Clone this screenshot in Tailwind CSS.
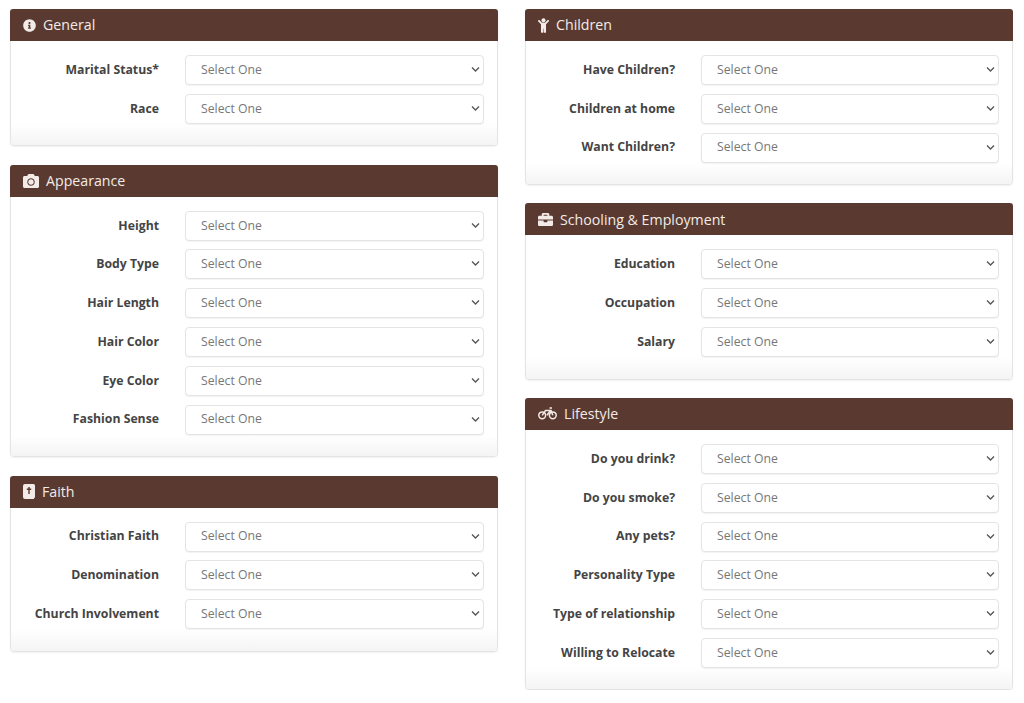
<!DOCTYPE html>
<html>
<head>
<meta charset="UTF-8" />
<title>Profile</title>
<script src="https://cdn.jsdelivr.net/npm/@tailwindcss/browser@4"></script>
</head>
<body class="bg-white font-['Open_Sans',sans-serif] text-[12.25px] text-[#444] overflow-hidden">
<div class="grid grid-cols-[488px_488px] gap-x-[27px] pl-[10px] pt-[9px]">

  <!-- left column -->
  <div class="flex flex-col gap-[18.4px]">
    <section class="rounded-[4px] border border-[#e4e4e4] shadow-[0_1px_2px_rgba(0,0,0,0.06)]">
      <header class="-m-px mb-0 h-[32px] flex items-center gap-[7px] pl-[13px] rounded-t-[3px] bg-[#5a3a30] text-[14.2px] text-[#f2ebe7]">
        <svg class="w-[13px] h-[13px]" viewBox="0 0 512 512" fill="currentColor"><path d="M256 8C119.043 8 8 119.083 8 256c0 136.997 111.043 248 248 248s248-111.003 248-248C504 119.083 392.957 8 256 8zm0 110c23.196 0 42 18.804 42 42s-18.804 42-42 42-42-18.804-42-42 18.804-42 42-42zm56 254c0 6.627-5.373 12-12 12h-88c-6.627 0-12-5.373-12-12v-24c0-6.627 5.373-12 12-12h12v-64h-12c-6.627 0-12-5.373-12-12v-24c0-6.627 5.373-12 12-12h64c6.627 0 12 5.373 12 12v100h12c6.627 0 12 5.373 12 12v24z"/></svg>
        General
      </header>
      <div class="flex flex-col gap-[8.8px] pt-[14px]">
        <label class="flex items-center gap-[26px]"><span class="w-[148px] text-right font-bold">Marital Status*</span><span class="relative w-[299px]"><select class="w-full h-[30px] pl-[15px] appearance-none rounded-[4px] border border-[#e4e4e4] bg-white text-[#777] shadow-[0_1px_1px_rgba(0,0,0,0.05)]"><option>Select One</option></select><svg class="absolute right-[4px] top-[11px] w-[9px] h-[7px] pointer-events-none" viewBox="0 0 9 7" fill="none" stroke="#555" stroke-width="1.3"><path d="M1 1.5l3.5 3.5L8 1.5"/></svg></span></label>
        <label class="flex items-center gap-[26px]"><span class="w-[148px] text-right font-bold">Race</span><span class="relative w-[299px]"><select class="w-full h-[30px] pl-[15px] appearance-none rounded-[4px] border border-[#e4e4e4] bg-white text-[#777] shadow-[0_1px_1px_rgba(0,0,0,0.05)]"><option>Select One</option></select><svg class="absolute right-[4px] top-[11px] w-[9px] h-[7px] pointer-events-none" viewBox="0 0 9 7" fill="none" stroke="#555" stroke-width="1.3"><path d="M1 1.5l3.5 3.5L8 1.5"/></svg></span></label>
      </div>
      <div class="h-[21.5px] rounded-b-[4px] bg-linear-to-b from-white to-[#f4f4f4]"></div>
    </section>

    <section class="rounded-[4px] border border-[#e4e4e4] shadow-[0_1px_2px_rgba(0,0,0,0.06)]">
      <header class="-m-px mb-0 h-[32px] flex items-center gap-[7px] pl-[13px] rounded-t-[3px] bg-[#5a3a30] text-[14.2px] text-[#f2ebe7]">
        <svg class="w-[16px] h-[16px]" viewBox="0 0 512 512" fill="currentColor"><path d="M512 144v288c0 26.5-21.5 48-48 48H48c-26.5 0-48-21.5-48-48V144c0-26.5 21.5-48 48-48h88l12.3-32.9c7-18.7 24.9-31.1 44.9-31.1h125.5c20 0 37.9 12.4 44.9 31.1L376 96h88c26.5 0 48 21.5 48 48zM376 288c0-66.2-53.8-120-120-120s-120 53.8-120 120 53.8 120 120 120 120-53.8 120-120zm-32 0c0 48.5-39.5 88-88 88s-88-39.5-88-88 39.5-88 88-88 88 39.5 88 88z"/></svg>
        Appearance
      </header>
      <div class="flex flex-col gap-[8.8px] pt-[14px]">
        <label class="flex items-center gap-[26px]"><span class="w-[148px] text-right font-bold">Height</span><span class="relative w-[299px]"><select class="w-full h-[30px] pl-[15px] appearance-none rounded-[4px] border border-[#e4e4e4] bg-white text-[#777] shadow-[0_1px_1px_rgba(0,0,0,0.05)]"><option>Select One</option></select><svg class="absolute right-[4px] top-[11px] w-[9px] h-[7px] pointer-events-none" viewBox="0 0 9 7" fill="none" stroke="#555" stroke-width="1.3"><path d="M1 1.5l3.5 3.5L8 1.5"/></svg></span></label>
        <label class="flex items-center gap-[26px]"><span class="w-[148px] text-right font-bold">Body Type</span><span class="relative w-[299px]"><select class="w-full h-[30px] pl-[15px] appearance-none rounded-[4px] border border-[#e4e4e4] bg-white text-[#777] shadow-[0_1px_1px_rgba(0,0,0,0.05)]"><option>Select One</option></select><svg class="absolute right-[4px] top-[11px] w-[9px] h-[7px] pointer-events-none" viewBox="0 0 9 7" fill="none" stroke="#555" stroke-width="1.3"><path d="M1 1.5l3.5 3.5L8 1.5"/></svg></span></label>
        <label class="flex items-center gap-[26px]"><span class="w-[148px] text-right font-bold">Hair Length</span><span class="relative w-[299px]"><select class="w-full h-[30px] pl-[15px] appearance-none rounded-[4px] border border-[#e4e4e4] bg-white text-[#777] shadow-[0_1px_1px_rgba(0,0,0,0.05)]"><option>Select One</option></select><svg class="absolute right-[4px] top-[11px] w-[9px] h-[7px] pointer-events-none" viewBox="0 0 9 7" fill="none" stroke="#555" stroke-width="1.3"><path d="M1 1.5l3.5 3.5L8 1.5"/></svg></span></label>
        <label class="flex items-center gap-[26px]"><span class="w-[148px] text-right font-bold">Hair Color</span><span class="relative w-[299px]"><select class="w-full h-[30px] pl-[15px] appearance-none rounded-[4px] border border-[#e4e4e4] bg-white text-[#777] shadow-[0_1px_1px_rgba(0,0,0,0.05)]"><option>Select One</option></select><svg class="absolute right-[4px] top-[11px] w-[9px] h-[7px] pointer-events-none" viewBox="0 0 9 7" fill="none" stroke="#555" stroke-width="1.3"><path d="M1 1.5l3.5 3.5L8 1.5"/></svg></span></label>
        <label class="flex items-center gap-[26px]"><span class="w-[148px] text-right font-bold">Eye Color</span><span class="relative w-[299px]"><select class="w-full h-[30px] pl-[15px] appearance-none rounded-[4px] border border-[#e4e4e4] bg-white text-[#777] shadow-[0_1px_1px_rgba(0,0,0,0.05)]"><option>Select One</option></select><svg class="absolute right-[4px] top-[11px] w-[9px] h-[7px] pointer-events-none" viewBox="0 0 9 7" fill="none" stroke="#555" stroke-width="1.3"><path d="M1 1.5l3.5 3.5L8 1.5"/></svg></span></label>
        <label class="flex items-center gap-[26px]"><span class="w-[148px] text-right font-bold">Fashion Sense</span><span class="relative w-[299px]"><select class="w-full h-[30px] pl-[15px] appearance-none rounded-[4px] border border-[#e4e4e4] bg-white text-[#777] shadow-[0_1px_1px_rgba(0,0,0,0.05)]"><option>Select One</option></select><svg class="absolute right-[4px] top-[11px] w-[9px] h-[7px] pointer-events-none" viewBox="0 0 9 7" fill="none" stroke="#555" stroke-width="1.3"><path d="M1 1.5l3.5 3.5L8 1.5"/></svg></span></label>
      </div>
      <div class="h-[21.5px] rounded-b-[4px] bg-linear-to-b from-white to-[#f4f4f4]"></div>
    </section>

    <section class="rounded-[4px] border border-[#e4e4e4] shadow-[0_1px_2px_rgba(0,0,0,0.06)]">
      <header class="-m-px mb-0 h-[32px] flex items-center gap-[7px] pl-[13px] rounded-t-[3px] bg-[#5a3a30] text-[14.2px] text-[#f2ebe7]">
        <svg class="w-[12px] h-[15px]" viewBox="0 0 12 15"><path fill="currentColor" d="M2 0h8.500a1.500 1.500 0 0 1 1.500 1.500V13a1 1 0 0 1-1 1v1H2a2 2 0 0 1-2-2V2a2 2 0 0 1 2-2z"/><path stroke="#5a3a30" stroke-width="1.400" d="M6 3v7M3.800 5.300h4.400"/></svg>
        Faith
      </header>
      <div class="flex flex-col gap-[8.8px] pt-[14px]">
        <label class="flex items-center gap-[26px]"><span class="w-[148px] text-right font-bold">Christian Faith</span><span class="relative w-[299px]"><select class="w-full h-[30px] pl-[15px] appearance-none rounded-[4px] border border-[#e4e4e4] bg-white text-[#777] shadow-[0_1px_1px_rgba(0,0,0,0.05)]"><option>Select One</option></select><svg class="absolute right-[4px] top-[11px] w-[9px] h-[7px] pointer-events-none" viewBox="0 0 9 7" fill="none" stroke="#555" stroke-width="1.3"><path d="M1 1.5l3.5 3.5L8 1.5"/></svg></span></label>
        <label class="flex items-center gap-[26px]"><span class="w-[148px] text-right font-bold">Denomination</span><span class="relative w-[299px]"><select class="w-full h-[30px] pl-[15px] appearance-none rounded-[4px] border border-[#e4e4e4] bg-white text-[#777] shadow-[0_1px_1px_rgba(0,0,0,0.05)]"><option>Select One</option></select><svg class="absolute right-[4px] top-[11px] w-[9px] h-[7px] pointer-events-none" viewBox="0 0 9 7" fill="none" stroke="#555" stroke-width="1.3"><path d="M1 1.5l3.5 3.5L8 1.5"/></svg></span></label>
        <label class="flex items-center gap-[26px]"><span class="w-[148px] text-right font-bold">Church Involvement</span><span class="relative w-[299px]"><select class="w-full h-[30px] pl-[15px] appearance-none rounded-[4px] border border-[#e4e4e4] bg-white text-[#777] shadow-[0_1px_1px_rgba(0,0,0,0.05)]"><option>Select One</option></select><svg class="absolute right-[4px] top-[11px] w-[9px] h-[7px] pointer-events-none" viewBox="0 0 9 7" fill="none" stroke="#555" stroke-width="1.3"><path d="M1 1.5l3.5 3.5L8 1.5"/></svg></span></label>
      </div>
      <div class="h-[21.5px] rounded-b-[4px] bg-linear-to-b from-white to-[#f4f4f4]"></div>
    </section>
  </div>

  <!-- right column -->
  <div class="flex flex-col gap-[18.4px]">
    <section class="rounded-[4px] border border-[#e4e4e4] shadow-[0_1px_2px_rgba(0,0,0,0.06)]">
      <header class="-m-px mb-0 h-[32px] flex items-center gap-[7px] pl-[13px] rounded-t-[3px] bg-[#5a3a30] text-[14.2px] text-[#f2ebe7]">
        <svg class="w-[11px] h-[15px]" viewBox="0 0 384 512" fill="currentColor"><path d="M120 72c0-39.765 32.235-72 72-72s72 32.235 72 72c0 39.764-32.235 72-72 72s-72-32.236-72-72zm254.627 1.373c-12.496-12.497-32.758-12.497-45.254 0L242.745 160H141.254L54.627 73.373c-12.496-12.497-32.758-12.497-45.254 0-12.497 12.497-12.497 32.758 0 45.254L104 213.254V480c0 17.673 14.327 32 32 32h16c17.673 0 32-14.327 32-32V368h16v112c0 17.673 14.327 32 32 32h16c17.673 0 32-14.327 32-32V213.254l94.627-94.627c12.497-12.497 12.497-32.757 0-45.254z"/></svg>
        Children
      </header>
      <div class="flex flex-col gap-[8.8px] pt-[14px]">
        <label class="flex items-center gap-[26px]"><span class="w-[149px] text-right font-bold">Have Children?</span><span class="relative w-[298px]"><select class="w-full h-[30px] pl-[15px] appearance-none rounded-[4px] border border-[#e4e4e4] bg-white text-[#777] shadow-[0_1px_1px_rgba(0,0,0,0.05)]"><option>Select One</option></select><svg class="absolute right-[4px] top-[11px] w-[9px] h-[7px] pointer-events-none" viewBox="0 0 9 7" fill="none" stroke="#555" stroke-width="1.3"><path d="M1 1.5l3.5 3.5L8 1.5"/></svg></span></label>
        <label class="flex items-center gap-[26px]"><span class="w-[149px] text-right font-bold">Children at home</span><span class="relative w-[298px]"><select class="w-full h-[30px] pl-[15px] appearance-none rounded-[4px] border border-[#e4e4e4] bg-white text-[#777] shadow-[0_1px_1px_rgba(0,0,0,0.05)]"><option>Select One</option></select><svg class="absolute right-[4px] top-[11px] w-[9px] h-[7px] pointer-events-none" viewBox="0 0 9 7" fill="none" stroke="#555" stroke-width="1.3"><path d="M1 1.5l3.5 3.5L8 1.5"/></svg></span></label>
        <label class="flex items-center gap-[26px]"><span class="w-[149px] text-right font-bold">Want Children?</span><span class="relative w-[298px]"><select class="w-full h-[30px] pl-[15px] appearance-none rounded-[4px] border border-[#e4e4e4] bg-white text-[#777] shadow-[0_1px_1px_rgba(0,0,0,0.05)]"><option>Select One</option></select><svg class="absolute right-[4px] top-[11px] w-[9px] h-[7px] pointer-events-none" viewBox="0 0 9 7" fill="none" stroke="#555" stroke-width="1.3"><path d="M1 1.5l3.5 3.5L8 1.5"/></svg></span></label>
      </div>
      <div class="h-[21.5px] rounded-b-[4px] bg-linear-to-b from-white to-[#f4f4f4]"></div>
    </section>

    <section class="rounded-[4px] border border-[#e4e4e4] shadow-[0_1px_2px_rgba(0,0,0,0.06)]">
      <header class="-m-px mb-0 h-[32px] flex items-center gap-[7px] pl-[13px] rounded-t-[3px] bg-[#5a3a30] text-[14.2px] text-[#f2ebe7]">
        <svg class="w-[15px] h-[15px]" viewBox="0 0 512 512" fill="currentColor"><path d="M320 336c0 8.840-7.160 16-16 16h-96c-8.840 0-16-7.160-16-16v-48H0v144c0 25.600 22.400 48 48 48h416c25.600 0 48-22.400 48-48V288H320v48zm144-208h-80V80c0-25.600-22.400-48-48-48H176c-25.600 0-48 22.400-48 48v48H48c-25.600 0-48 22.400-48 48v80h512v-80c0-25.600-22.400-48-48-48zm-144 0H192V96h128v32z"/></svg>
        Schooling &amp; Employment
      </header>
      <div class="flex flex-col gap-[8.8px] pt-[14px]">
        <label class="flex items-center gap-[26px]"><span class="w-[149px] text-right font-bold">Education</span><span class="relative w-[298px]"><select class="w-full h-[30px] pl-[15px] appearance-none rounded-[4px] border border-[#e4e4e4] bg-white text-[#777] shadow-[0_1px_1px_rgba(0,0,0,0.05)]"><option>Select One</option></select><svg class="absolute right-[4px] top-[11px] w-[9px] h-[7px] pointer-events-none" viewBox="0 0 9 7" fill="none" stroke="#555" stroke-width="1.3"><path d="M1 1.5l3.5 3.5L8 1.5"/></svg></span></label>
        <label class="flex items-center gap-[26px]"><span class="w-[149px] text-right font-bold">Occupation</span><span class="relative w-[298px]"><select class="w-full h-[30px] pl-[15px] appearance-none rounded-[4px] border border-[#e4e4e4] bg-white text-[#777] shadow-[0_1px_1px_rgba(0,0,0,0.05)]"><option>Select One</option></select><svg class="absolute right-[4px] top-[11px] w-[9px] h-[7px] pointer-events-none" viewBox="0 0 9 7" fill="none" stroke="#555" stroke-width="1.3"><path d="M1 1.5l3.5 3.5L8 1.5"/></svg></span></label>
        <label class="flex items-center gap-[26px]"><span class="w-[149px] text-right font-bold">Salary</span><span class="relative w-[298px]"><select class="w-full h-[30px] pl-[15px] appearance-none rounded-[4px] border border-[#e4e4e4] bg-white text-[#777] shadow-[0_1px_1px_rgba(0,0,0,0.05)]"><option>Select One</option></select><svg class="absolute right-[4px] top-[11px] w-[9px] h-[7px] pointer-events-none" viewBox="0 0 9 7" fill="none" stroke="#555" stroke-width="1.3"><path d="M1 1.5l3.5 3.5L8 1.5"/></svg></span></label>
      </div>
      <div class="h-[21.5px] rounded-b-[4px] bg-linear-to-b from-white to-[#f4f4f4]"></div>
    </section>

    <section class="rounded-[4px] border border-[#e4e4e4] shadow-[0_1px_2px_rgba(0,0,0,0.06)]">
      <header class="-m-px mb-0 h-[32px] flex items-center gap-[7px] pl-[13px] rounded-t-[3px] bg-[#5a3a30] text-[14.2px] text-[#f2ebe7]">
        <svg class="w-[19px] h-[13px]" viewBox="0 0 19 13" fill="none" stroke="currentColor" stroke-width="1.500"><circle cx="4.200" cy="8.300" r="3.400"/><circle cx="14.800" cy="8.300" r="3.400"/><path d="M4.200 8.300L7.500 3.500h5.500l1.800 4.800M9 8.300L12.500 3.500M11.500 1h2.500"/></svg>
        Lifestyle
      </header>
      <div class="flex flex-col gap-[8.8px] pt-[14px]">
        <label class="flex items-center gap-[26px]"><span class="w-[149px] text-right font-bold">Do you drink?</span><span class="relative w-[298px]"><select class="w-full h-[30px] pl-[15px] appearance-none rounded-[4px] border border-[#e4e4e4] bg-white text-[#777] shadow-[0_1px_1px_rgba(0,0,0,0.05)]"><option>Select One</option></select><svg class="absolute right-[4px] top-[11px] w-[9px] h-[7px] pointer-events-none" viewBox="0 0 9 7" fill="none" stroke="#555" stroke-width="1.3"><path d="M1 1.5l3.5 3.5L8 1.5"/></svg></span></label>
        <label class="flex items-center gap-[26px]"><span class="w-[149px] text-right font-bold">Do you smoke?</span><span class="relative w-[298px]"><select class="w-full h-[30px] pl-[15px] appearance-none rounded-[4px] border border-[#e4e4e4] bg-white text-[#777] shadow-[0_1px_1px_rgba(0,0,0,0.05)]"><option>Select One</option></select><svg class="absolute right-[4px] top-[11px] w-[9px] h-[7px] pointer-events-none" viewBox="0 0 9 7" fill="none" stroke="#555" stroke-width="1.3"><path d="M1 1.5l3.5 3.5L8 1.5"/></svg></span></label>
        <label class="flex items-center gap-[26px]"><span class="w-[149px] text-right font-bold">Any pets?</span><span class="relative w-[298px]"><select class="w-full h-[30px] pl-[15px] appearance-none rounded-[4px] border border-[#e4e4e4] bg-white text-[#777] shadow-[0_1px_1px_rgba(0,0,0,0.05)]"><option>Select One</option></select><svg class="absolute right-[4px] top-[11px] w-[9px] h-[7px] pointer-events-none" viewBox="0 0 9 7" fill="none" stroke="#555" stroke-width="1.3"><path d="M1 1.5l3.5 3.5L8 1.5"/></svg></span></label>
        <label class="flex items-center gap-[26px]"><span class="w-[149px] text-right font-bold">Personality Type</span><span class="relative w-[298px]"><select class="w-full h-[30px] pl-[15px] appearance-none rounded-[4px] border border-[#e4e4e4] bg-white text-[#777] shadow-[0_1px_1px_rgba(0,0,0,0.05)]"><option>Select One</option></select><svg class="absolute right-[4px] top-[11px] w-[9px] h-[7px] pointer-events-none" viewBox="0 0 9 7" fill="none" stroke="#555" stroke-width="1.3"><path d="M1 1.5l3.5 3.5L8 1.5"/></svg></span></label>
        <label class="flex items-center gap-[26px]"><span class="w-[149px] text-right font-bold">Type of relationship</span><span class="relative w-[298px]"><select class="w-full h-[30px] pl-[15px] appearance-none rounded-[4px] border border-[#e4e4e4] bg-white text-[#777] shadow-[0_1px_1px_rgba(0,0,0,0.05)]"><option>Select One</option></select><svg class="absolute right-[4px] top-[11px] w-[9px] h-[7px] pointer-events-none" viewBox="0 0 9 7" fill="none" stroke="#555" stroke-width="1.3"><path d="M1 1.5l3.5 3.5L8 1.5"/></svg></span></label>
        <label class="flex items-center gap-[26px]"><span class="w-[149px] text-right font-bold">Willing to Relocate</span><span class="relative w-[298px]"><select class="w-full h-[30px] pl-[15px] appearance-none rounded-[4px] border border-[#e4e4e4] bg-white text-[#777] shadow-[0_1px_1px_rgba(0,0,0,0.05)]"><option>Select One</option></select><svg class="absolute right-[4px] top-[11px] w-[9px] h-[7px] pointer-events-none" viewBox="0 0 9 7" fill="none" stroke="#555" stroke-width="1.3"><path d="M1 1.5l3.5 3.5L8 1.5"/></svg></span></label>
      </div>
      <div class="h-[21.5px] rounded-b-[4px] bg-linear-to-b from-white to-[#f4f4f4]"></div>
    </section>
  </div>
</div>
</body>
</html>
